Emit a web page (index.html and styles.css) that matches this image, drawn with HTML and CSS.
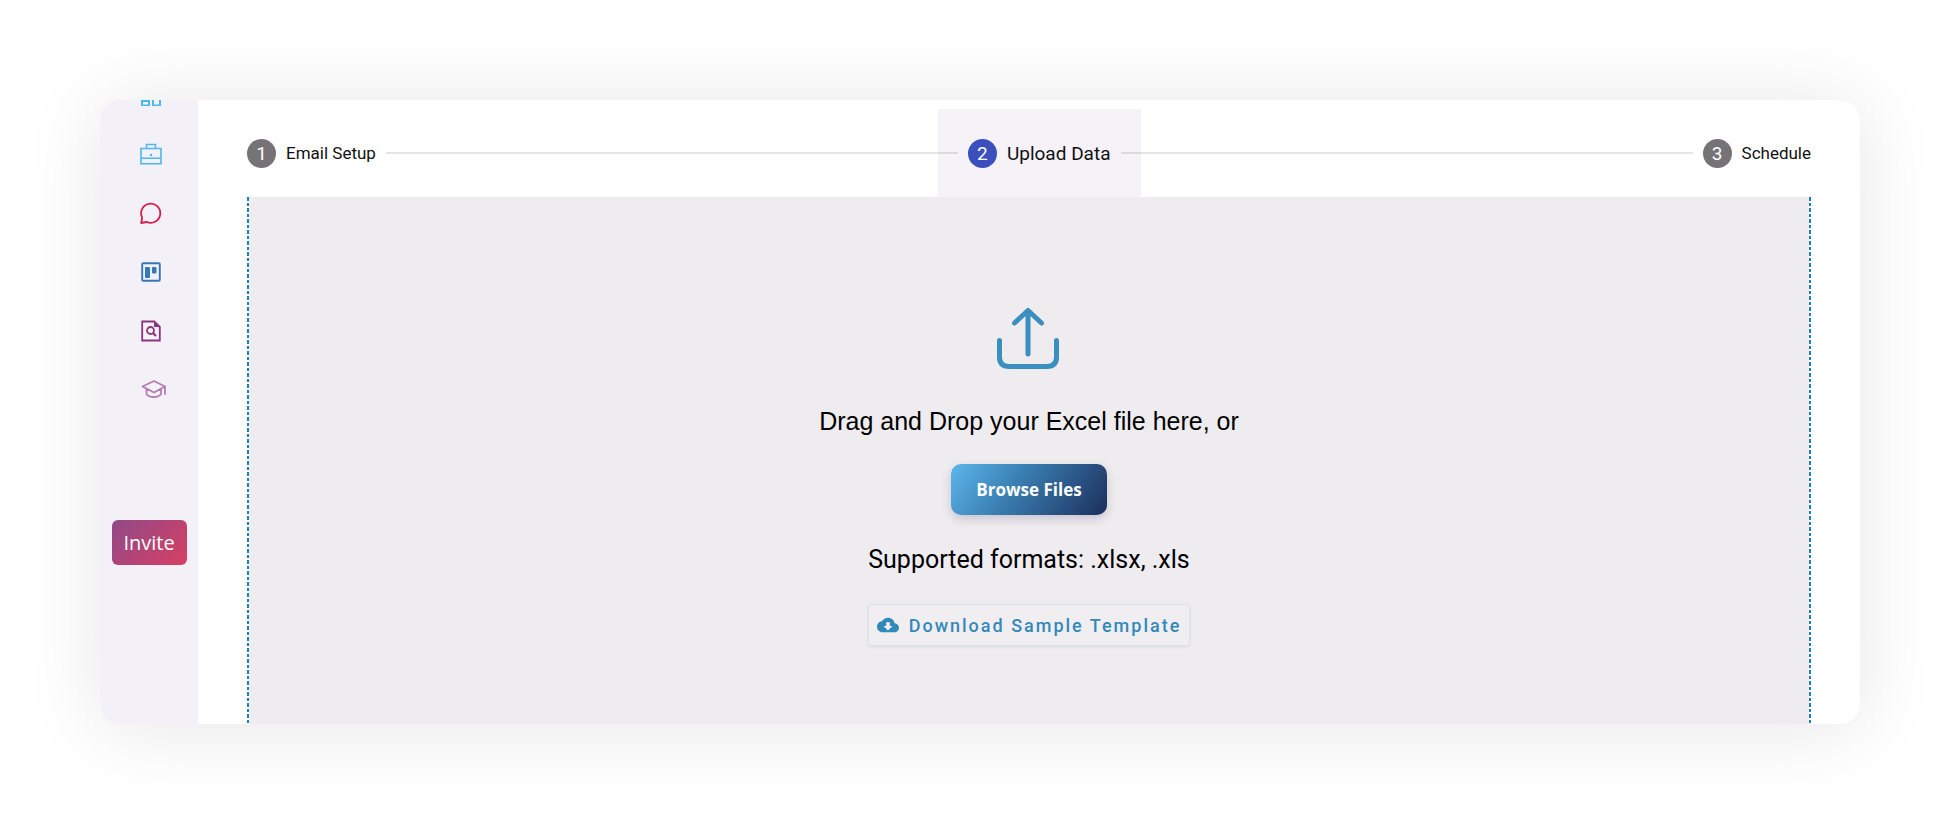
FILE: index.html
```
<!DOCTYPE html>
<html lang="en">
<head>
  <meta charset="utf-8">
  <title>Upload Data</title>
  <link rel="stylesheet" href="styles.css">
</head>
<body>
<div class="app">
  <aside class="sidebar">
    <nav class="nav">
      <a href="#" aria-label="Dashboard" class="nav-dashboard">
        <svg viewBox="0 0 22 22" fill="none" stroke="currentColor" stroke-width="2"><path d="M2 2h7v11H2zM13 2h7v5h-7zM2 17h7v4.500H2zM13 11h7v10.500h-7z"/></svg>
      </a>
      <a href="#" aria-label="Jobs" class="nav-jobs">
        <svg viewBox="0 0 22 22" fill="none" stroke="currentColor" stroke-width="1.6"><path d="M1 5.500h20v15.300H1zM6.500 5.500V1.500h9v4M1 15.200h20"/><circle cx="11" cy="12" r="1.200" fill="currentColor" stroke="none"/></svg>
      </a>
      <a href="#" aria-label="Messages" class="nav-messages">
        <svg viewBox="0 0 22 22" fill="none" stroke="currentColor" stroke-width="1.800" stroke-linejoin="round"><path d="M1.200 21l1-5.300A9.600 9.600 0 1 1 6.800 20z"/></svg>
      </a>
      <a href="#" aria-label="Board" class="nav-board">
        <svg viewBox="0 0 22 22"><rect x="2.200" y="2.200" width="17.600" height="17.600" rx="1" fill="none" stroke="currentColor" stroke-width="1.900"/><rect x="5" y="6" width="5" height="11" rx="1" fill="currentColor"/><rect x="12" y="6" width="4.500" height="6.500" rx="1" fill="currentColor"/></svg>
      </a>
      <a href="#" aria-label="Search records" class="nav-records">
        <svg viewBox="0 0 22 22" fill="none" stroke="currentColor" stroke-width="1.800"><path d="M2.200 1.500h12l5.600 5.500v13.500H2.200z"/><path d="M14 1v6h6.500z" fill="currentColor" stroke="none"/><circle cx="10.500" cy="10.500" r="3.500"/><path d="M13 13l3 3" stroke-width="2.200"/></svg>
      </a>
      <a href="#" aria-label="Training" class="nav-training">
        <svg viewBox="0 0 26 22" fill="none" stroke="currentColor" stroke-width="1.800" stroke-linejoin="round" stroke-linecap="round"><path d="M1.500 7.500L13 2l11 5.500-11 6zM24 7.500v7.500M5.500 10v5c2.500 4 12 4 14.500 0v-5"/></svg>
      </a>
    </nav>
    <button type="button" class="invite">Invite</button>
  </aside>

  <main class="main">
    <ol class="stepper">
      <li class="step"><span class="step-number">1</span>Email Setup</li>
      <li class="step-line line-before" aria-hidden="true"></li>
      <li class="step active" aria-current="step"><span class="step-number">2</span>Upload Data</li>
      <li class="step-line line-after" aria-hidden="true"></li>
      <li class="step"><span class="step-number">3</span>Schedule</li>
    </ol>

    <section class="dropzone">
      <svg class="upload-icon" viewBox="0 0 64 62" fill="none" stroke="currentColor" stroke-width="5" stroke-linecap="round" stroke-linejoin="round"><path d="M31 46V3M17.500 15L31 2.500 44.500 15M2.500 32.500V49Q2.500 58.500 12 58.500H50Q59.500 58.500 59.500 49V32.500"/></svg>
      <p class="drop-text">Drag and Drop your Excel file here, or</p>
      <button type="button" class="browse">Browse Files</button>
      <p class="formats">Supported formats: .xlsx, .xls</p>
      <button type="button" class="download">
        <svg viewBox="0 0 24 24" fill="currentColor" aria-hidden="true"><path d="M19.350 10.040C18.670 6.590 15.640 4 12 4 9.110 4 6.600 5.640 5.350 8.040 2.340 8.360 0 10.910 0 14c0 3.310 2.690 6 6 6h13c2.760 0 5-2.240 5-5 0-2.640-2.050-4.780-4.650-4.960zM17 13l-5 5-5-5h3V9h4v4h3z"/></svg>
        Download Sample Template
      </button>
    </section>
  </main>
</div>
</body>
</html>
```

FILE: styles.css
```
* { box-sizing: border-box; }
body { margin: 0; padding: 100px; background: #fff; color: #111; font-family: Roboto, sans-serif; }
button { font: inherit; cursor: pointer; }

.app {
  display: flex;
  min-height: calc(100vh - 200px);
  border-radius: 20px;
  overflow: hidden;
  background: #fff;
  box-shadow: 0 4px 80px rgba(0, 0, 0, 0.1);
}

/* sidebar */
.sidebar { display: flex; flex-direction: column; align-items: center; flex: none; width: 98px; background: #f3f1f7; }
.nav { display: flex; flex-direction: column; align-items: center; gap: 37px; margin-top: -16px; padding-left: 3px; }
.nav a { display: block; height: 22px; }
.nav svg { display: block; height: 22px; }
.nav-dashboard, .nav-jobs { color: #4db8ef; }
.nav-messages { color: #d81e4f; }
.nav-board { color: #3478b8; }
.nav-records { color: #8c3480; }
.nav-training { color: #b57cb0; padding-left: 6px; }
.invite {
  margin-top: 119px;
  width: 75px;
  height: 45px;
  padding: 0;
  border: 0;
  border-radius: 6px;
  background: linear-gradient(135deg, #8f4a8a, #d83f62);
  color: #fff;
  font-family: "Open Sans", sans-serif;
  font-size: 20px;
}

/* stepper */
.main { display: flex; flex-direction: column; flex: 1; padding: 9px 49px 0; }
.stepper { display: flex; align-items: center; height: 88px; margin: 0; padding: 0; list-style: none; }
.step { display: flex; align-items: center; gap: 10px; font-size: 17px; white-space: nowrap; }
.step-number {
  display: flex;
  align-items: center;
  justify-content: center;
  width: 29px;
  height: 29px;
  border-radius: 50%;
  background: #757375;
  color: #fff;
  font-size: 19px;
}
.step.active { height: 100%; padding: 0 30px; background: #f5f3f7; font-size: 19px; }
.active .step-number { background: #3c50bd; }
.step-line { flex: 1; height: 2px; background: rgba(0, 0, 0, 0.1); z-index: 1; }
.line-before { margin: 0 -20px 0 10px; }
.line-after { margin: 0 10px 0 -20px; }

/* dropzone, dashed on both sides */
.dropzone {
  display: flex;
  flex-direction: column;
  align-items: center;
  flex: 1;
  padding-top: 111px;
  background:
    repeating-linear-gradient(#1a80b6 0 4px, #fff 4px 6px, #1a80b6 6px 9px, #fff 9px 11px) left / 2px 100% no-repeat,
    repeating-linear-gradient(#1a80b6 0 4px, #fff 4px 6px, #1a80b6 6px 9px, #fff 9px 11px) right / 2px 100% no-repeat,
    #efecef;
}
.upload-icon { width: 64px; height: 62px; color: #3a8fc0; }
.drop-text, .formats { margin: 0; color: #000; font-size: 25px; line-height: 30px; }
.drop-text { margin-top: 36px; font-family: "Liberation Sans", sans-serif; }
.browse {
  width: 156px;
  height: 51px;
  margin: 28px 0 30px;
  border: 0;
  border-radius: 10px;
  background: linear-gradient(125deg, #5bb6ec, #3b7fb2 40%, #1c2f5c);
  box-shadow: 0 4px 10px rgba(40, 40, 90, 0.2);
  color: #fff;
  font-family: "Open Sans", sans-serif;
  font-size: 17px;
  font-weight: 700;
}
.download {
  display: flex;
  align-items: center;
  gap: 10px;
  height: 42px;
  margin-top: 29px;
  padding: 0 8px;
  border: 1px solid #d8e4ee;
  border-radius: 4px;
  background: #f1eef2;
  box-shadow: 0 1px 3px rgba(0, 0, 0, 0.08);
  color: #3189b9;
  font-size: 18px;
  font-weight: 500;
  letter-spacing: 2px;
}
.download svg { width: 22px; height: 22px; }
```
